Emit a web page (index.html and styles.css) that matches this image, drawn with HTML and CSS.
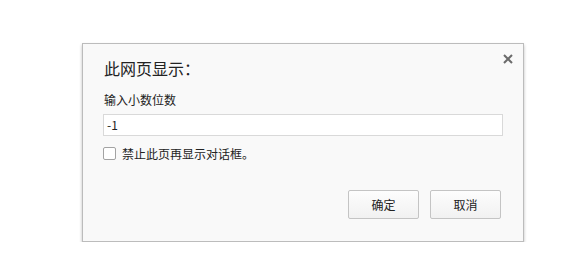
FILE: index.html
```html
<!DOCTYPE html>
<html>
<head>
<meta charset="utf-8">
<link rel="stylesheet" href="styles.css">
</head>
<body>
<div class="dialog">
  <div class="close">
    <svg width="10" height="10" viewBox="0 0 10 10"><path d="M1 1L9 9M9 1L1 9" stroke="#6b6b6b" stroke-width="2"/></svg>
  </div>
  <div class="title">此网页显示：</div>
  <div class="label">输入小数位数</div>
  <div class="input">-1</div>
  <div class="check-row">
    <span class="checkbox"></span>
    <span class="check-text">禁止此页再显示对话框。</span>
  </div>
  <div class="buttons">
    <div class="btn">确定</div>
    <div class="btn">取消</div>
  </div>
</div>
</body>
</html>
```

FILE: styles.css
```css
body {
  margin: 0;
  background: #fff;
  font-family: "Noto Sans CJK SC", "Liberation Sans", sans-serif;
  color: #222;
}
.dialog {
  position: relative;
  box-sizing: border-box;
  margin: 43px 0 0 82px;
  width: 442px;
  height: 199px;
  background: #f9f9f9;
  border: 1px solid #bcbcbc;
  box-shadow: 0 2px 3px rgba(0,0,0,0.25);
  padding: 0 0 0 20px;
}
.close {
  position: absolute;
  top: 10px;
  right: 10px;
  width: 10px;
  height: 10px;
  line-height: 0;
}
.title {
  font-size: 16px;
  margin-top: 13px;
  height: 22px;
  line-height: 22px;
  padding-left: 1px;
}
.label {
  font-size: 12px;
  margin-top: 12px;
  height: 18px;
  line-height: 18px;
  padding-left: 1px;
}
.input {
  box-sizing: border-box;
  margin-top: 5px;
  width: 400px;
  height: 22px;
  border: 1px solid #d9d9d9;
  background: #fff;
  font-size: 12px;
  line-height: 20px;
  padding-left: 3px;
}
.check-row {
  display: flex;
  align-items: center;
  margin-top: 10px;
  height: 14px;
}
.checkbox {
  box-sizing: border-box;
  width: 13px;
  height: 13px;
  border: 1px solid #a3a3a3;
  border-radius: 2px;
  background: #fff;
}
.check-text {
  font-size: 12px;
  margin-left: 6px;
}
.buttons {
  display: flex;
  justify-content: flex-end;
  gap: 11px;
  margin-top: 30px;
  padding-right: 22px;
}
.btn {
  box-sizing: border-box;
  width: 71px;
  height: 29px;
  border: 1px solid #c4c4c4;
  border-radius: 2px;
  background: linear-gradient(#fdfdfd, #f1f1f1);
  font-size: 12px;
  line-height: 27px;
  text-align: center;
  color: #222;
}
```
